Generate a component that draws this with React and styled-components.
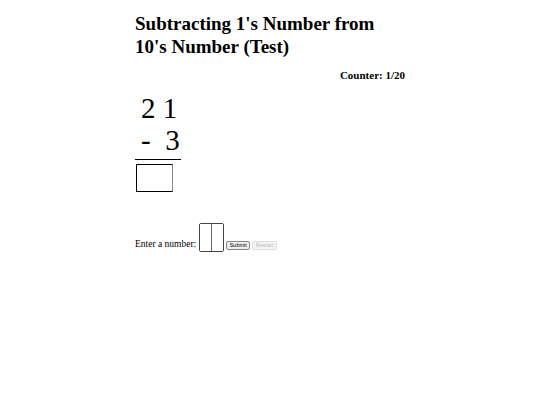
import styled, { createGlobalStyle } from "styled-components";

const Global = createGlobalStyle`
  body {
    margin: 0;
    font-family: "Liberation Serif", "Times New Roman", serif;
    color: #000;
    background: #fff;
  }
`;

const Page = styled.div`
  width: 270px;
  margin-left: 135px;
  padding-top: 12px;
`;

const Title = styled.h1`
  margin: 0;
  font-size: 19px;
  line-height: 23px;
  font-weight: bold;
`;

const Counter = styled.div`
  margin-top: 11px;
  text-align: right;
  font-size: 11px;
  font-weight: bold;
`;

const Problem = styled.div`
  display: inline-flex;
  flex-direction: column;
  margin-top: 11px;
  font-size: 29px;
  line-height: 32px;
`;

const Row = styled.div`
  padding-left: 6px;
  white-space: pre;
`;

const Rule = styled.div`
  width: 46px;
  border-top: 1px solid #000;
  margin-top: 3px;
`;

const AnswerBox = styled.div`
  width: 35px;
  height: 26px;
  margin-top: 4px;
  margin-left: 1px;
  border: 1px solid #000;
  border-right-color: #888;
`;

const Form = styled.div`
  display: flex;
  align-items: flex-end;
  margin-top: 31px;
  font-size: 9.5px;
`;

const Label = styled.span`
  margin-bottom: 3px;
`;

const Digits = styled.div`
  display: flex;
  margin-left: 3px;
  border: 1px solid #444;
  border-radius: 2px;
`;

const Digit = styled.input`
  width: 11px;
  height: 27px;
  padding: 0;
  border: none;
  outline: none;
  & + & {
    border-left: 1px solid #666;
  }
`;

const Button = styled.button`
  margin-left: 2px;
  margin-bottom: 2px;
  height: 9px;
  padding: 0 2.5px;
  font-family: "Liberation Sans", Arial, sans-serif;
  font-size: 5.5px;
  line-height: 7px;
  color: ${(p) => (p.disabled ? "#bbb" : "#000")};
  background: ${(p) => (p.disabled ? "#f4f4f4" : "#efefef")};
  border: 1px solid ${(p) => (p.disabled ? "#ddd" : "#888")};
  border-radius: 2px;
`;

export default function App() {
  return (
    <>
      <Global />
      <Page>
        <Title>
          Subtracting 1's Number from
          <br />
          10's Number (Test)
        </Title>
        <Counter>Counter: 1/20</Counter>
        <Problem>
          <Row>2 1</Row>
          <Row>-  3</Row>
          <Rule />
          <AnswerBox />
        </Problem>
        <Form>
          <Label>Enter a number:</Label>
          <Digits>
            <Digit type="text" />
            <Digit type="text" />
          </Digits>
          <Button>Submit</Button>
          <Button disabled>Restart</Button>
        </Form>
      </Page>
    </>
  );
}
